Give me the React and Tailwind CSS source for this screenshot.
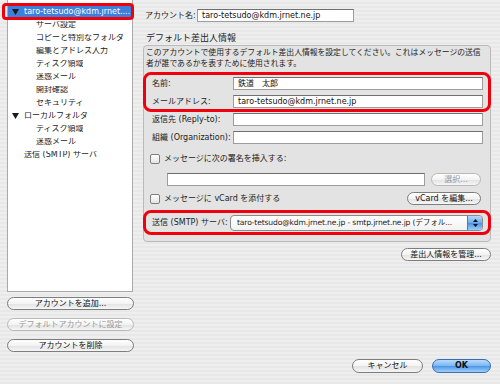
const font = "font-['DejaVu_Sans','Noto_Sans_CJK_JP',sans-serif]";

function Triangle() {
  return (
    <svg width="7" height="6" viewBox="0 0 7 6" className="shrink-0">
      <polygon points="0,0 7,0 3.5,6" fill="#1a1a1a" />
    </svg>
  );
}

function TreeRow({ label, level = 1, open, selected }) {
  const pad = level === 0 ? "pl-[4px]" : level === 2 ? "pl-[16px]" : "pl-[28px]";
  return (
    <div
      className={`relative flex h-[13px] items-center ${pad} ${
        selected ? "bg-[#3d7fdc] text-white" : "text-[#1c1c1c]"
      }`}
    >
      {open && (
        <span className="flex w-[12px] justify-start">
          <Triangle />
        </span>
      )}
      <span className="overflow-hidden whitespace-nowrap">{label}</span>
      {selected && (
        <span className="absolute -left-[6px] -right-[2px] -top-[2px] -bottom-[2px] rounded-[4px] border-[3px] border-[#f0000c]" />
      )}
    </div>
  );
}

function Pill({ children, className = "", disabled }) {
  return (
    <button
      type="button"
      className={`flex h-[13px] items-center justify-center rounded-full border bg-[linear-gradient(#ffffff,#f3f3f3_50%,#e2e2e2_52%,#f6f6f6)] text-[8px] leading-none ${
        disabled ? "border-[#b9b9b9] text-[#9a9a9a]" : "border-[#7d7d7d] text-[#111]"
      } ${className}`}
    >
      {children}
    </button>
  );
}

function Field({ className = "", value = "" }) {
  return (
    <div
      className={`flex h-[13px] items-center border border-[#9d9d9d] border-t-[#6f6f6f] bg-white pl-[4px] text-[8px] leading-none text-[#111] ${className}`}
    >
      {value}
    </div>
  );
}

function Checkbox() {
  return (
    <span className="h-[10px] w-[10px] shrink-0 rounded-[2px] border border-[#7f7f7f] bg-[linear-gradient(#ffffff,#e4e4e4)]" />
  );
}

export default function App() {
  const tree = [
    ["サーバ設定", 1],
    ["コピーと特別なフォルダ", 1],
    ["編集とアドレス入力", 1],
    ["ディスク領域", 1],
    ["迷惑メール", 1],
    ["開封確認", 1],
    ["セキュリティ", 1],
  ];

  return (
    <div
      className={`flex h-[384px] w-[500px] bg-[repeating-linear-gradient(180deg,#eeeeee_0px,#eeeeee_2px,#e8e8e8_2px,#e8e8e8_4px)] text-[8px] leading-none ${font}`}
    >
      {/* account tree */}
      <div className="flex w-[143px] flex-col pl-[7px]">
        <div className="h-[292px] w-[126px] border-x border-b border-[#a9a9a9] bg-white pt-[5px]">
          <TreeRow label="taro-tetsudo@kdm.jrnet...." level={0} open selected />
          {tree.map(([label, level]) => (
            <TreeRow key={label} label={label} level={level} />
          ))}
          <TreeRow label="ローカルフォルダ" level={0} open />
          <TreeRow label="ディスク領域" />
          <TreeRow label="迷惑メール" />
          <TreeRow label="送信 (SMTP) サーバ" level={2} />
        </div>
        <div className="mt-[5px] flex w-[127px] flex-col gap-[8px]">
          <Pill>アカウントを追加...</Pill>
          <Pill disabled>デフォルトアカウントに設定</Pill>
          <Pill>アカウントを削除</Pill>
        </div>
      </div>

      {/* settings */}
      <div className="flex flex-1 flex-col pb-[11px] pr-[9px] text-[#1c1c1c]">
        <div className="mt-[9px] flex h-[13px] items-center">
          <span className="w-[54px] pl-[2px]">アカウント名:</span>
          <Field className="w-[157px]" value="taro-tetsudo@kdm.jrnet.ne.jp" />
        </div>

        <div className="mt-[10px] flex h-[12px] items-center pl-[3px] text-[9px]">デフォルト差出人情報</div>

        <div className="mt-[1px] rounded-[4px] border border-[#bababa] bg-[#e3e3e3] pb-[6px]">
          <div className="whitespace-nowrap px-[2px] pt-[1px] text-[7.8px] leading-[11px]">
            <p>このアカウントで使用するデフォルト差出人情報を設定してください。これはメッセージの送信</p>
            <p>者が誰であるかを表すために使用されます。</p>
          </div>

          <div className="-mx-[1px] mt-[3px] flex flex-col gap-[5px] rounded-[8px] border-[3px] border-[#f0000c] pb-[1px] pl-[6px] pt-[2px]">
            <div className="flex items-center">
              <span className="w-[81px]">名前:</span>
              <Field className="w-[250px]" value="鉄道　太郎" />
            </div>
            <div className="flex items-center">
              <span className="w-[81px]">メールアドレス:</span>
              <Field className="w-[250px]" value="taro-tetsudo@kdm.jrnet.ne.jp" />
            </div>
          </div>

          <div className="mt-[1px] flex items-center pl-[8px]">
            <span className="w-[81px]">返信先 (Reply-to):</span>
            <Field className="w-[250px]" />
          </div>
          <div className="mt-[5px] flex items-center pl-[8px]">
            <span className="w-[81px]">組織 (Organization):</span>
            <Field className="w-[250px]" />
          </div>

          <div className="mt-[10px] flex items-center gap-[4px] pl-[6px]">
            <Checkbox />
            <span>メッセージに次の署名を挿入する:</span>
          </div>
          <div className="mt-[9px] flex items-center pl-[23px] pr-[9px]">
            <Field className="w-[258px]" />
            <Pill disabled className="ml-auto w-[50px]">
              選択...
            </Pill>
          </div>
          <div className="mt-[6px] flex items-center gap-[4px] pl-[6px] pr-[9px]">
            <Checkbox />
            <span>メッセージに vCard を添付する</span>
            <Pill className="ml-auto w-[74px]">vCard を編集...</Pill>
          </div>

          <div className="-mx-[1px] mt-[5px] flex items-center rounded-[8px] border-[3px] border-[#f0000c] pb-[1px] pl-[6px] pt-[2px]">
            <span className="w-[78px]">送信 (SMTP) サーバ:</span>
            <div className="flex h-[16px] w-[253px] items-center overflow-hidden rounded-[4px] border border-[#8a8a8a] bg-[linear-gradient(#ffffff,#f2f2f2)]">
              <span className="flex-1 whitespace-nowrap pl-[6px] text-[7.6px] tracking-[-0.15px]">
                taro-tetsudo@kdm.jrnet.ne.jp - smtp.jrnet.ne.jp (デフォル...
              </span>
              <span className="flex h-full w-[15px] shrink-0 flex-col items-center justify-center gap-[2px] border-l border-[#4a7bc0] bg-[linear-gradient(#b7d8f8,#6aa9ec_50%,#4c92e4_52%,#9ccdfa)]">
                <svg width="5" height="3" viewBox="0 0 5 3">
                  <polygon points="2.5,0 5,3 0,3" fill="#111" />
                </svg>
                <svg width="5" height="3" viewBox="0 0 5 3">
                  <polygon points="0,0 5,0 2.5,3" fill="#111" />
                </svg>
              </span>
            </div>
          </div>
        </div>

        <div className="mt-[6px] flex justify-end">
          <Pill className="w-[90px]">差出人情報を管理...</Pill>
        </div>

        <div className="mt-auto flex justify-end gap-[9px]">
          <Pill className="h-[14px] w-[71px]">キャンセル</Pill>
          <button
            type="button"
            className="flex h-[14px] w-[59px] items-center justify-center rounded-full border border-[#3b6db0] bg-[linear-gradient(#b9dbfb,#78b5f0_50%,#4d95e6_52%,#9fd0fb)] text-[8px] font-bold leading-none text-[#111]"
          >
            OK
          </button>
        </div>
      </div>
    </div>
  );
}
